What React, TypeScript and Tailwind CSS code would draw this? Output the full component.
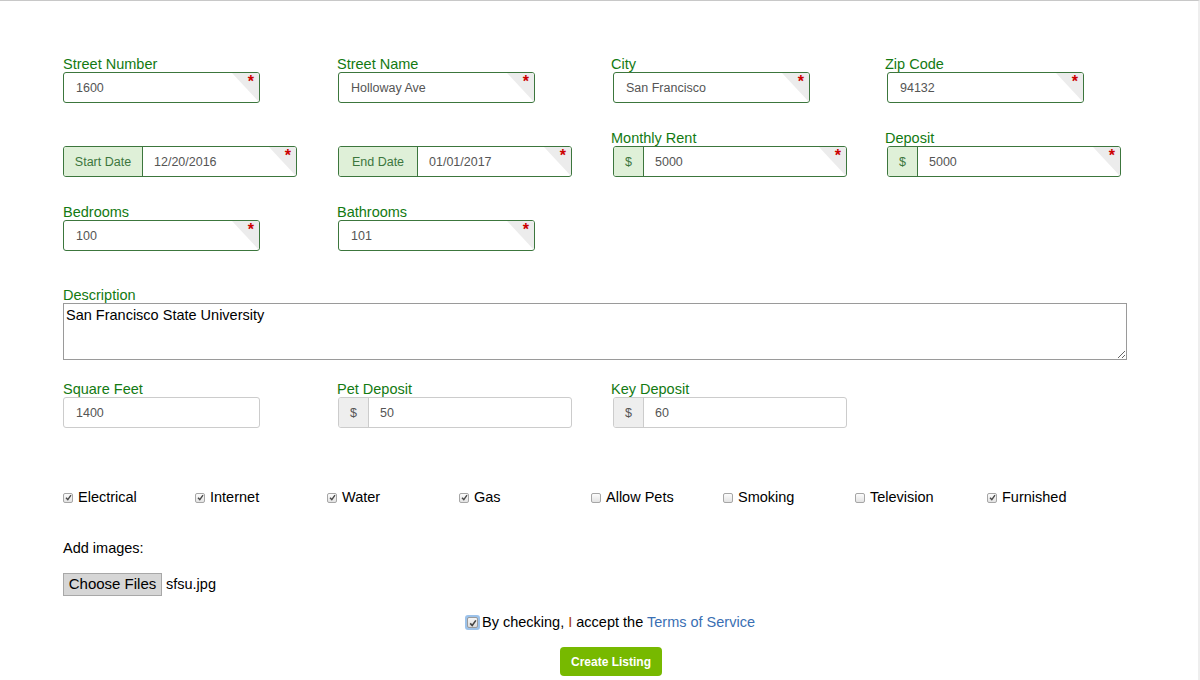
import React from 'react';

const font = { fontFamily: '"Liberation Sans", Arial, sans-serif' };

const Star = () => (
  <>
    <span className="absolute top-0 right-0 w-[27px] h-full bg-[#ececec] [clip-path:polygon(0_0,100%_0,100%_100%)]" />
    <span className="absolute top-[1px] right-[5px] text-[16px] leading-[16px] font-bold text-[#cc0000]">*</span>
  </>
);

const Label: React.FC<{ text: string }> = ({ text }) => (
  <div className="h-[15px] text-[14.5px] leading-[15px] text-[#137a12] whitespace-nowrap">{text}</div>
);

const TextField: React.FC<{ label: string; value: string; required?: boolean; shift?: string }> = ({
  label,
  value,
  required = true,
  shift = '',
}) => (
  <div>
    <Label text={label} />
    <div
      className={`relative w-[197px] h-[31px] rounded-[3px] border overflow-hidden flex items-center pl-[12px] pt-[2px] text-[12.5px] text-[#555] bg-white ${shift} ${
        required ? 'border-[#3c763d]' : 'border-[#ccc]'
      }`}
    >
      {value}
      {required && <Star />}
    </div>
  </div>
);

const GroupField: React.FC<{ label?: string; addon: string; value: string; required?: boolean; shift?: string }> = ({
  label,
  addon,
  value,
  required = true,
  shift = '',
}) => (
  <div>
    {label ? <Label text={label} /> : <div className="h-[15px]" />}
    <div
      className={`relative w-[234px] h-[31px] rounded-[3px] border overflow-hidden flex text-[12.5px] bg-white ${shift} ${
        required ? 'border-[#3c763d]' : 'border-[#ccc]'
      }`}
    >
      <div
        className={`flex items-center justify-center border-r pt-[1px] ${addon === '$' ? 'w-[30px]' : 'w-[79px]'} ${
          required ? 'bg-[#dff0d8] text-[#3c763d] border-[#3c763d]' : 'bg-[#eee] text-[#555] border-[#ccc]'
        }`}
      >
        {addon}
      </div>
      <div className="flex-1 flex items-center pl-[11px] pt-[2px] text-[#555]">{value}</div>
      {required && <Star />}
    </div>
  </div>
);

const Check: React.FC<{ checked: boolean; label: string }> = ({ checked, label }) => (
  <div className="flex items-center text-[14.5px] text-black whitespace-nowrap">
    <span className="w-[10px] h-[10px] rounded-[2px] border border-[#a6a6a6] bg-gradient-to-b from-[#fcfcfc] to-[#e3e3e3] flex items-center justify-center mr-[5px]">
      {checked && (
        <svg width="7" height="7" viewBox="0 0 7 7">
          <path d="M1 3.8 L2.8 5.6 L6 1.2" fill="none" stroke="#4a4a4a" strokeWidth="1.4" />
        </svg>
      )}
    </span>
    {label}
  </div>
);

const amenities: [string, boolean][] = [
  ['Electrical', true],
  ['Internet', true],
  ['Water', true],
  ['Gas', true],
  ['Allow Pets', false],
  ['Smoking', false],
  ['Television', false],
  ['Furnished', true],
];

export default function App() {
  return (
    <div style={font} className="w-[1200px] h-[680px] bg-white border-t border-[#c8c8c8] border-r-2 border-r-[#eeeeee] overflow-hidden">
      <div className="ml-[63px] w-[1096px] pt-[56px]">
        <div className="grid grid-cols-[274px_274px_274px_274px]">
          <TextField label="Street Number" value="1600" />
          <TextField label="Street Name" value="Holloway Ave" shift="ml-[1px]" />
          <TextField label="City" value="San Francisco" shift="ml-[2px]" />
          <TextField label="Zip Code" value="94132" shift="ml-[2px]" />
        </div>

        <div className="grid grid-cols-[274px_274px_274px_274px] mt-[28px]">
          <GroupField addon="Start Date" value="12/20/2016" />
          <GroupField addon="End Date" value="01/01/2017" shift="ml-[1px]" />
          <GroupField label="Monthly Rent" addon="$" value="5000" shift="ml-[2px]" />
          <GroupField label="Deposit" addon="$" value="5000" shift="ml-[2px]" />
        </div>

        <div className="grid grid-cols-[274px_274px_274px_274px] mt-[28px]">
          <TextField label="Bedrooms" value="100" />
          <TextField label="Bathrooms" value="101" shift="ml-[1px]" />
        </div>

        <div className="mt-[37px]">
          <Label text="Description" />
          <textarea
            defaultValue="San Francisco State University"
            className="block w-[1064px] h-[57px] border border-[#9a9a9a] px-[2px] pt-[3px] text-[14.5px] leading-[17px] text-black outline-none"
            style={font}
          />
        </div>

        <div className="grid grid-cols-[274px_274px_274px_274px] mt-[22px]">
          <TextField label="Square Feet" value="1400" required={false} />
          <GroupField label="Pet Deposit" addon="$" value="50" required={false} shift="ml-[1px]" />
          <GroupField label="Key Deposit" addon="$" value="60" required={false} shift="ml-[2px]" />
        </div>

        <div className="grid grid-cols-[132px_132px_132px_132px_132px_132px_132px_132px] mt-[59px] h-[18px] items-center">
          {amenities.map(([name, checked]) => (
            <Check key={name} label={name} checked={checked} />
          ))}
        </div>

        <div className="mt-[35px] text-[14.5px] leading-[16px] text-black">Add images:</div>

        <div className="mt-[17px] flex items-center text-[14.5px] text-black">
          <span className="w-[99px] h-[23px] flex items-center justify-center bg-[#d6d6d6] border border-[#a8a8a8] text-[15px]">
            Choose Files
          </span>
          <span className="ml-[4px]">sfsu.jpg</span>
        </div>

        <div className="mt-[16px] flex justify-center items-center text-[14.5px] text-black -ml-[2px]">
          <span className="w-[15px] h-[15px] rounded-[3px] bg-[#9cc2ea] flex items-center justify-center mr-[2px]">
            <span className="w-[11px] h-[11px] rounded-[2px] border border-[#9a9a9a] bg-gradient-to-b from-[#f6f6f6] to-[#dcdcdc] flex items-center justify-center">
              <svg width="8" height="8" viewBox="0 0 7 7">
                <path d="M1 3.8 L2.8 5.6 L6 1.2" fill="none" stroke="#444" strokeWidth="1.4" />
              </svg>
            </span>
          </span>
          <span>
            By checking, <span className="text-[#a3380a]">I</span> accept the{' '}
            <span className="text-[#3a6fb3]">Terms of Service</span>
          </span>
        </div>

        <div className="mt-[13px] flex justify-center">
          <button className="w-[102px] h-[29px] pt-[1px] rounded-[4px] bg-[#77b900] text-white text-[12px] font-bold" style={font}>
            Create Listing
          </button>
        </div>
      </div>
    </div>
  );
}
